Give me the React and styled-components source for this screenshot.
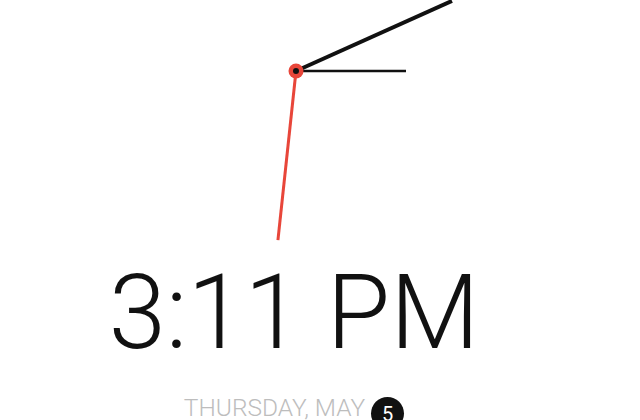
import styled, { createGlobalStyle } from "styled-components";

const GlobalStyle = createGlobalStyle`
  html, body {
    margin: 0;
    padding: 0;
    background: #ffffff;
  }
  body {
    font-family: Roboto, "Noto Sans", sans-serif;
  }
`;

const Screen = styled.div`
  width: 640px;
  height: 420px;
  overflow: hidden;
  display: flex;
  flex-direction: column;
  align-items: center;
  padding-right: 52px;
  box-sizing: border-box;
`;

const Face = styled.svg`
  display: block;
  flex-shrink: 0;
`;

const Time = styled.div`
  margin-top: 11px;
  font-size: 103px;
  line-height: 1;
  font-weight: 300;
  color: #111111;
  white-space: nowrap;
`;

const DateRow = styled.div`
  margin-top: 32px;
  display: flex;
  align-items: flex-start;
  gap: 6px;
`;

const DateText = styled.span`
  font-size: 24.5px;
  line-height: 1;
  font-weight: 300;
  color: #bdbdbd;
  white-space: nowrap;
`;

const DayBadge = styled.span`
  width: 33px;
  height: 33px;
  margin-top: 1px;
  border-radius: 50%;
  background: #111111;
  color: #ffffff;
  font-size: 20px;
  font-weight: 400;
  display: flex;
  align-items: center;
  justify-content: center;
`;

const CX = 202;
const CY = 71;

function hand(angleDeg, length) {
  const a = (angleDeg * Math.PI) / 180;
  return { x: CX + Math.sin(a) * length, y: CY - Math.cos(a) * length };
}

function ClockFace() {
  const hour = hand(90, 110);
  const minute = hand(65.8, 171);
  const second = hand(186.1, 170);
  return (
    <Face width="400" height="250" viewBox="0 0 400 250">
      <line x1={CX} y1={CY} x2={hour.x} y2={hour.y} stroke="#111" strokeWidth="2.5" />
      <line x1={CX} y1={CY} x2={minute.x} y2={minute.y} stroke="#111" strokeWidth="4" />
      <line x1={CX} y1={CY} x2={second.x} y2={second.y} stroke="#e8463a" strokeWidth="3" />
      <circle cx={CX} cy={CY} r="7.5" fill="#e8463a" />
      <circle cx={CX} cy={CY} r="3" fill="#111" />
    </Face>
  );
}

export default function App() {
  return (
    <>
      <GlobalStyle />
      <Screen>
        <ClockFace />
        <Time>3:11 PM</Time>
        <DateRow>
          <DateText>THURSDAY, MAY</DateText>
          <DayBadge>5</DayBadge>
        </DateRow>
      </Screen>
    </>
  );
}
